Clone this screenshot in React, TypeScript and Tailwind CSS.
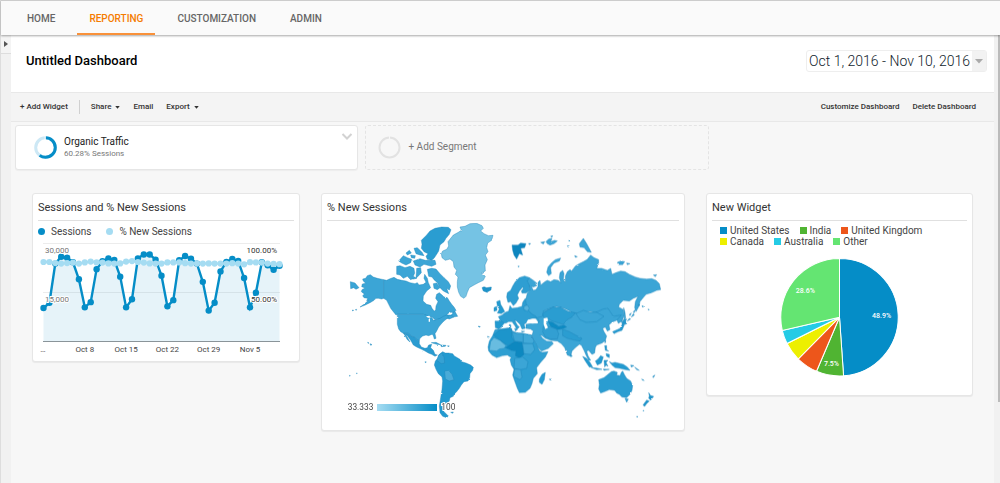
import type { ReactNode } from 'react';

type Shape = { d: string; fill?: string };
type Region = { transform?: string; shapes: Shape[] };

const navItems = ['HOME', 'REPORTING', 'CUSTOMIZATION', 'ADMIN'];

const sessions = [
  10100, 11700, 23700, 25800, 25500, 24100, 18900, 10300, 11900, 22000, 24400,
  25300, 24800, 19700, 10300, 12800, 25300, 26500, 26500, 24900, 20000, 10600,
  12500, 24700, 26000, 25200, 23700, 18100, 9300, 11700, 21300, 24200, 25100,
  24500, 19300, 10300, 14800, 24100, 23200, 21800, 23000,
];

const newSessions = [
  80.6, 80.6, 79.5, 79, 79.5, 80, 79, 80.2, 81, 80.2, 80, 79.2, 79, 79.2, 81,
  81.6, 80.6, 80, 79.2, 79, 79, 80.2, 80.2, 80.2, 79.4, 79, 79, 79, 79.2, 79,
  79, 79, 79.4, 79, 78.2, 80.4, 80.2, 80, 79, 78.6, 78.4,
];

const slices = [
  { name: 'United States', value: 48.9, color: '#058dc7' },
  { name: 'India', value: 7.5, color: '#50b432' },
  { name: 'United Kingdom', value: 6, color: '#ed561b' },
  { name: 'Canada', value: 5.2, color: '#edef00' },
  { name: 'Australia', value: 3.8, color: '#24cbe5' },
  { name: 'Other', value: 28.6, color: '#64e572' },
];

const regions: Region[] = [
  // Canada, Alaska, Greenland and Iceland
  {
    shapes: [
      {
        d: 'M191,266 172,262 160,258 151,251 142,254 137,262 128,264 130,270 137,277 127,279 125,287 135,291 126,296 124,302 133,309 128,314 132,320 143,322 140,330 146,328 132,340 120,348 134,343 150,335 162,328 168,322 175,322 185,324 191,322Z',
      },
      {
        d: 'M191,266 200,268 210,263 222,259 232,265 245,268 258,270 270,275 285,278 292,275 297,282 310,280 318,274 312,262 314,250 322,262 325,275 332,290 320,300 310,315 309,330 320,340 332,343 336,352 343,361 347,356 348,345 354,332 347,322 350,310 358,305 366,312 372,318 382,320 388,330 395,340 402,348 408,358 400,366 390,362 380,372 396,372 402,378 388,384 374,380 360,384 345,386 336,378 324,376 310,370 233,370 228,372 220,362 212,352 206,340 200,328 191,322Z',
      },
      { d: 'M91,272 105,276 117,290 108,295 101,290 92,293Z' },
      { d: 'M97,357 101,358 98,360ZM106,356 110,355 109,358Z' },
      {
        d: 'M304,148 318,134 330,120 345,112 365,108 385,109 393,116 388,130 378,142 372,152 360,162 356,180 350,190 342,202 335,208 322,205 318,196 324,188 312,182 304,172 306,160Z',
        fill: '#2b9dd1',
      },
      {
        d: 'M230,226 240,224 255,230 270,226 282,232 284,246 280,256 290,262 272,266 262,256 250,262 240,252 230,250Z',
      },
      { d: 'M236,210 250,194 262,200 275,205 272,215 258,222 245,216Z' },
      { d: 'M258,186 268,178 274,186 262,192ZM272,192 286,194 284,202 274,200Z' },
      { d: 'M282,172 292,170 306,184 312,194 300,192 288,188Z' },
      { d: 'M280,210 300,203 316,208 345,208 348,220 335,226 312,220 300,228 285,222Z' },
      { d: 'M290,232 302,230 304,245 296,254 288,262Z' },
      {
        d: 'M322,235 335,232 348,234 360,248 372,260 385,272 392,285 388,297 380,292 386,308 370,300 360,290 352,275 342,266 336,258 326,256Z',
      },
      { d: 'M340,278 350,276 360,290 352,296 342,292Z' },
      { d: 'M394,372 404,360 413,376 400,378Z' },
      {
        d: 'M364,188 368,180 380,175 386,165 384,152 392,142 400,132 415,124 424,118 420,108 435,106 450,98 470,97 486,104 490,112 482,120 492,128 505,134 519,133 515,148 503,156 500,170 504,182 496,192 502,206 495,222 496,240 484,246 496,256 490,268 475,275 462,282 448,290 442,304 438,316 432,322 422,316 416,304 412,288 412,272 414,258 406,250 410,238 402,228 400,212 390,204 376,208 366,200Z',
        fill: '#75c3e4',
      },
      { d: 'M486,290 492,287 500,290 514,288 513,297 500,304 490,300Z', fill: '#1e93c9' },
    ],
  },
  // United States, Central and South America
  {
    transform: 'translate(0 330)',
    shapes: [
      {
        d: 'M232,40 310,40 318,42 326,46 336,50 340,58 348,56 360,52 370,46 380,42 386,48 382,52 372,60 366,66 356,78 350,90 345,98 348,112 343,114 340,104 336,100 326,104 318,102 308,105 300,112 298,118 292,118 284,108 276,106 265,97 250,97 242,92 236,84 232,70Z',
      },
      {
        d: 'M250,97 265,97 276,106 284,108 292,118 298,118 298,128 304,138 315,142 322,140 326,132 335,130 332,140 340,148 345,160 352,162 345,166 335,160 325,156 315,150 305,145 290,138 280,132 272,118 262,104Z',
        fill: '#2a9bd0',
      },
      { d: 'M252,99 258,102 264,112 270,123 262,116Z' },
      { d: 'M318,46 328,44 332,50 324,50ZM326,54 330,52 330,62 326,62Z', fill: '#ffffff' },
      { d: 'M334,125 348,124 362,131 350,130ZM362,132 378,133 376,136 364,137ZM383,134 388,135 384,137Z' },
      {
        d: 'M358,160 368,152 376,156 385,156 398,158 403,165 412,170 420,175 425,182 438,186 452,192 460,199 458,208 450,218 449,230 444,240 432,242 424,252 418,262 410,272 402,280 400,286 390,290 388,300 382,306 370,308 368,320 372,332 385,345 380,350 368,346 360,335 358,315 362,290 366,265 368,240 366,228 355,218 348,205 343,192 346,180 354,172Z',
        fill: '#249ad0',
      },
      { d: 'M356,162 366,156 372,168 374,186 364,188 350,178Z', fill: '#36a1d3' },
      { d: 'M374,210 386,208 396,220 402,236 388,240 376,234Z', fill: '#49abd8' },
      { d: 'M392,334 400,333 398,337ZM150,128 156,131 152,133ZM88,223 91,224 89,226ZM109,216 112,217 110,218Z' },
      { d: 'M315,182 319,183 316,185ZM143,124 147,126 144,127ZM475,75 481,77 477,79Z' },
    ],
  },
  // Northern Europe and Russia
  {
    transform: 'translate(510 60)',
    shapes: [
      {
        d: 'M118,200 130,208 140,216 140,224 130,228 124,226 130,238 138,236 144,226 144,214 150,208 152,222 165,212 172,208 182,212 192,206 205,208 212,215 208,200 210,185 218,178 222,188 220,205 226,214 226,195 232,182 240,176 245,180 256,165 268,158 280,152 292,145 302,132 312,140 326,146 326,158 320,172 335,172 352,178 362,172 366,190 378,185 392,180 405,182 418,190 436,198 450,202 470,204 485,203 498,208 508,218 512,236 500,238 485,245 468,250 458,262 450,272 448,284 438,302 434,290 436,272 444,256 430,262 418,270 400,268 388,280 386,288 400,296 402,315 396,330 385,337 378,320 362,316 352,292 340,302 325,308 300,302 280,305 262,306 256,316 240,300 222,292 200,286 188,290 165,298 160,310 166,322 164,338 145,335 138,322 124,318 112,306 108,290 104,275 108,262 112,246 120,238 116,222 110,210Z',
      },
      {
        d: 'M50,258 52,245 62,238 68,225 76,212 88,200 104,195 118,200 112,210 118,222 120,238 108,246 96,246 94,240 100,232 98,228 88,240 82,252 86,262 78,276 70,284 62,272 54,274Z',
        fill: '#2d9ed2',
      },
      { d: 'M20,272 30,268 32,280 38,290 44,302 34,308 22,306 28,294 22,284Z', fill: '#249ad0' },
      { d: 'M12,290 20,286 21,298 12,301Z', fill: '#249ad0' },
      {
        d: 'M66,102 84,102 92,96 108,98 104,110 92,112 98,132 88,128 80,144 72,132 68,118Z',
        fill: '#0e86bf',
      },
      { d: 'M152,94 164,92 160,99ZM168,92 176,84 186,82 182,92 194,88 202,90 192,98 180,102 172,98ZM182,76 188,74 186,79Z' },
      { d: 'M176,194 170,184 174,168 184,156 196,146 212,141 208,150 192,156 182,170 184,188Z' },
      { d: 'M268,98 280,82 290,98 304,124 292,122 282,110 270,108Z' },
      { d: 'M382,154 392,150 404,152 398,161 386,161ZM410,156 420,158 412,161ZM490,192 500,191 496,197Z' },
      { d: 'M232,104 238,105 234,108ZM236,88 240,88 238,91ZM254,134 262,137 256,139ZM116,97 122,98 118,101ZM84,165 88,166 85,168Z' },
      { d: 'M401,290 405,304 407,322 403,326 402,308Z' },
      { d: 'M394,330 406,330 410,338 398,344ZM456,284 461,286 458,289ZM474,294 478,296 475,297ZM430,308 433,312 424,318ZM418,322 422,324 412,330Z' },
    ],
  },
  // Rest of Europe, Asia, Africa and Oceania
  {
    transform: 'translate(480 330)',
    shapes: [
      {
        d: 'M62,60 55,47 66,42 76,34 86,30 90,14 96,22 112,20 126,16 128,4 136,-8 138,5 142,24 154,38 168,46 170,52 158,52 150,54 144,58 138,66 132,70 136,82 126,84 120,70 110,60 104,58 112,72 118,78 110,86 106,76 96,62 86,62 78,66 70,66Z',
        fill: '#2d9ed2',
      },
      { d: 'M45,60 63,60 73,66 64,78 56,84 46,80Z', fill: '#249ad0' },
      { d: 'M132,16 142,12 148,22 142,30 132,26Z', fill: '#55b2dc' },
      { d: 'M104,82 112,86 106,90ZM88,70 93,72 92,80 88,80ZM124,90 134,91 126,93Z' },
      {
        d: 'M138,70 155,67 170,68 178,62 172,50 188,46 190,30 220,18 252,26 270,34 292,36 330,38 352,32 370,24 384,22 400,46 424,42 410,58 395,64 387,72 390,86 382,90 376,78 368,82 372,92 380,105 376,118 366,126 350,132 346,140 344,156 336,160 326,148 320,150 324,164 332,178 326,178 318,162 312,148 304,132 298,130 286,140 276,150 272,166 262,162 254,140 244,128 232,120 212,118 196,112 186,104 180,102 188,112 200,120 216,122 220,128 205,142 185,150 174,140 166,126 158,112 156,102 160,90 152,84 138,82Z',
      },
      {
        d: 'M188,38 202,28 220,18 242,18 262,30 286,36 276,48 262,56 250,70 236,66 216,60 204,52 192,50Z',
        fill: '#2b9dd1',
      },
      { d: 'M288,38 310,28 330,34 350,34 372,46 350,62 318,64 300,56Z' },
      { d: 'M204,60 218,64 236,76 252,72 260,78 244,84 230,86 212,76Z', fill: '#0f8bc3' },
      { d: 'M190,76 206,76 230,84 236,98 232,114 212,114 196,108 188,92Z', fill: '#339fd2' },
      { d: 'M248,84 268,92 290,104 306,112 300,120 286,118 262,112 248,104Z', fill: '#2b9dd1' },
      { d: 'M191,52 202,50 204,58 198,66 204,80 196,84 191,70Z', fill: '#ffffff' },
      { d: 'M140,64 144,56 156,54 160,58 172,60 174,66 156,68Z', fill: '#ffffff' },
      {
        d: 'M45,86 58,84 75,82 90,80 98,90 112,96 126,96 140,100 154,102 160,116 170,132 178,148 186,154 204,152 196,168 182,184 170,200 172,218 160,232 156,248 150,262 136,274 118,275 112,262 104,240 98,222 102,205 94,192 90,175 94,170 82,162 68,164 50,170 36,162 26,150 24,138 28,120 38,104Z',
        fill: '#2e9fd2',
      },
      { d: 'M40,102 60,86 95,82 95,108 104,122 84,134 60,118Z', fill: '#1e95cb' },
      { d: 'M96,94 112,96 130,98 130,124 104,120Z', fill: '#3aa4d5' },
      { d: 'M130,98 154,102 162,120 158,128 130,126Z', fill: '#42a9d8' },
      { d: 'M32,122 42,110 60,118 78,134 72,142 58,144 50,150 28,148Z', fill: '#68bce0' },
      { d: 'M76,140 104,122 126,124 132,160 118,172 106,164 108,150 94,148Z', fill: '#0c88c0' },
      { d: 'M128,128 158,128 164,146 152,160 132,158Z', fill: '#42a9d8' },
      { d: 'M104,172 128,168 144,182 140,202 120,206 102,202Z' },
      { d: 'M104,204 122,206 126,228 120,236 100,226Z', fill: '#42a9d8' },
      { d: 'M178,234 186,220 196,214 193,236 186,250 178,244Z', fill: '#249ad0' },
      {
        d: 'M356,236 372,230 384,220 394,212 402,210 412,214 410,222 420,224 424,214 428,210 434,222 440,232 452,240 458,254 456,268 450,280 440,290 426,288 418,280 410,276 404,268 388,266 374,272 362,276 356,264 358,250Z',
        fill: '#2b9dd1',
      },
      { d: 'M435,292 445,294 440,304Z' },
      { d: 'M506,275 512,284 521,286 512,297 506,292 508,284ZM500,297 508,300 500,308 494,316 489,312Z', fill: '#1e95cb' },
      { d: 'M388,182 396,186 405,184 430,190 442,198 450,208 436,206 420,202 405,200 396,192Z', fill: '#249ad0' },
      { d: 'M346,180 354,174 362,164 370,168 364,186 352,192Z', fill: '#249ad0' },
      { d: 'M308,166 320,172 330,184 338,198 328,198 316,180Z', fill: '#249ad0' },
      { d: 'M334,200 350,201 366,205 350,206ZM370,204 388,205 372,208Z', fill: '#249ad0' },
      { d: 'M372,178 384,178 378,184 384,196 378,192 374,198Z', fill: '#249ad0' },
      { d: 'M374,134 380,134 380,146 386,150 376,148ZM378,158 388,160 388,170 380,166ZM374,118 378,120 375,126Z', fill: '#249ad0' },
      { d: 'M272,160 277,166 272,167ZM452,192 462,194 454,198ZM464,198 478,208 470,206ZM485,234 493,238 488,238ZM518,226 525,222 520,230Z' },
      { d: 'M430,56 440,54 436,62 440,66 430,68ZM428,68 432,74 426,88 414,92 402,98 398,92 412,86 420,82Z', fill: '#249ad0' },
      { d: 'M208,234 215,235 210,237ZM470,346 474,347 471,349ZM489,328 492,329 490,331ZM22,106 28,108 24,110Z' },
      { d: 'M474,10 480,12 476,14ZM460,32 466,26 462,36ZM448,40 454,36 450,44Z' },
    ],
  },
];

function Caret() {
  return (
    <svg className="w-[5px] h-[3px]" viewBox="0 0 6 4" fill="currentColor" aria-hidden="true">
      <path d="M0 0h6L3 3.5z" />
    </svg>
  );
}

function Widget({ title, children }: { title: string; children: ReactNode }) {
  return (
    <section className="rounded-[3px] border border-[#e6e6e6] bg-white px-[5px] shadow-[0_1px_1px_rgba(0,0,0,0.06)]">
      <h2 className="border-b border-[#e0e0e0] pt-[6px] pb-[4px] text-[11px] leading-4 text-[#333]">
        {title}
      </h2>
      {children}
    </section>
  );
}

function TimelineChart() {
  const x = (i: number) => 5.5 + i * 5.9;
  const ySessions = (v: number) => 101 - (v / 30000) * 98;
  const yPercent = (v: number) => 101 - (v / 100) * 98;
  const line = sessions.map((v, i) => `${x(i)},${ySessions(v)}`).join(' ');
  const percentLine = newSessions.map((v, i) => `${x(i)},${yPercent(v)}`).join(' ');
  const ticks = [
    { label: 'Oct 8', day: 7 },
    { label: 'Oct 15', day: 14 },
    { label: 'Oct 22', day: 21 },
    { label: 'Oct 29', day: 28 },
    { label: 'Nov 5', day: 35 },
  ];

  return (
    <svg className="block w-full" viewBox="0 0 256 120" role="img" aria-label="Sessions and % New Sessions">
      <path d="M5 3.5H242M5 52.5H242" stroke="#ececec" />
      <polygon points={`5.5,101 ${line} ${x(40)},101`} fill="#058dc7" fillOpacity="0.1" />
      <path d="M5 101.5H242" stroke="#8a9499" />
      <g fill="#058dc7">
        <polyline points={line} fill="none" stroke="#058dc7" strokeWidth="2.4" />
        {sessions.map((v, i) => (
          <circle key={i} cx={x(i)} cy={ySessions(v)} r="3.2" />
        ))}
      </g>
      <g fill="#a5dcf2">
        <polyline points={percentLine} fill="none" stroke="#a5dcf2" strokeWidth="2.4" />
        {newSessions.map((v, i) => (
          <circle key={i} cx={x(i)} cy={yPercent(v)} r="3.1" />
        ))}
      </g>
      <g className="font-[Roboto,sans-serif] text-[8px]" stroke="#fff" strokeWidth="2" paintOrder="stroke">
        <text x="7" y="13" fill="#777">30,000</text>
        <text x="7" y="62" fill="#777">15,000</text>
        <text x="239" y="13" fill="#333" textAnchor="end">100.00%</text>
        <text x="239" y="62" fill="#333" textAnchor="end">50.00%</text>
      </g>
      <g className="font-[Roboto,sans-serif] text-[8px]" fill="#444" textAnchor="middle">
        <text x="5" y="112">…</text>
        {ticks.map((t) => (
          <text key={t.label} x={x(t.day)} y="112">
            {t.label}
          </text>
        ))}
      </g>
    </svg>
  );
}

function WorldMap() {
  return (
    <svg className="block w-full" viewBox="21 93 1056 600" role="img" aria-label="% New Sessions by country">
      <defs>
        <filter id="coast" x="0" y="0" width="100%" height="100%">
          <feTurbulence type="fractalNoise" baseFrequency="0.07" numOctaves="2" seed="4" result="noise" />
          <feDisplacementMap in="SourceGraphic" in2="noise" scale="5" xChannelSelector="R" yChannelSelector="G" />
        </filter>
        <linearGradient id="scale">
          <stop offset="0" stopColor="#a5dcf2" />
          <stop offset="1" stopColor="#058dc7" />
        </linearGradient>
      </defs>
      <g
        filter="url(#coast)"
        fill="#3aa5d6"
        stroke="#1c84b8"
        strokeOpacity="0.6"
        strokeWidth="2"
        strokeLinejoin="round"
      >
        {regions.map((region, i) => (
          <g key={i} transform={region.transform}>
            {region.shapes.map((shape) => (
              <path
                key={shape.d}
                d={shape.d}
                fill={shape.fill}
                stroke={shape.fill === '#ffffff' ? 'none' : undefined}
              />
            ))}
          </g>
        ))}
      </g>
      <rect x="171" y="639" width="180" height="21" fill="url(#scale)" />
      <g
        className="font-[Roboto,sans-serif] text-[25px]"
        fill="#444"
        stroke="#fff"
        strokeWidth="6"
        paintOrder="stroke"
      >
        <text x="160" y="657" textAnchor="end">33.333</text>
        <text x="364" y="657">100</text>
      </g>
    </svg>
  );
}

function PieChart() {
  const radius = 58.5;
  const total = slices.reduce((sum, s) => sum + s.value, 0);
  const point = (share: number, r: number) => {
    const angle = share * Math.PI * 2;
    return `${Math.sin(angle) * r},${-Math.cos(angle) * r}`;
  };
  let start = 0;

  return (
    <svg className="block w-full" viewBox="-127 -59 254 118" role="img" aria-label="Sessions by country">
      {slices.map((slice) => {
        const from = start;
        const to = start + slice.value / total;
        start = to;
        return (
          <path
            key={slice.name}
            d={`M0,0L${point(from, radius)}A${radius},${radius} 0 0 1 ${point(to, radius)}Z`}
            fill={slice.color}
            stroke="#fff"
            strokeWidth="1"
          />
        );
      })}
      <g className="font-[Roboto,sans-serif] text-[7px] font-medium" fill="#fff" textAnchor="middle">
        <text x="42" y="1">48.9%</text>
        <text x="-8" y="49">7.5%</text>
        <text x="-34" y="-24">28.6%</text>
      </g>
    </svg>
  );
}

function Toolbar() {
  const buttonClass = 'flex items-center gap-1 cursor-pointer';
  return (
    <div className="flex h-[30px] items-center justify-between border-y border-[#e8e8e8] bg-[#f4f4f4] pl-[9px] pr-[18px] text-[8px] font-medium text-[#333]">
      <div className="flex items-center">
        <button type="button" className={buttonClass}>+ Add Widget</button>
        <div className="mx-[11px] h-[14px] w-px bg-[#d0d0d0]" />
        <div className="flex gap-[13px]">
          <button type="button" className={buttonClass}>Share <Caret /></button>
          <button type="button" className={buttonClass}>Email</button>
          <button type="button" className={buttonClass}>Export <Caret /></button>
        </div>
      </div>
      <div className="flex gap-[13px]">
        <button type="button" className={buttonClass}>Customize Dashboard</button>
        <button type="button" className={buttonClass}>Delete Dashboard</button>
      </div>
    </div>
  );
}

function Segments() {
  return (
    <div className="grid grid-cols-2 gap-[7px] pt-[3px] pl-1 w-[71%]">
      <div className="flex h-[45px] justify-between rounded-[3px] border border-[#e6e6e6] bg-white pl-[18px] pr-1 shadow-[0_1px_1px_rgba(0,0,0,0.04)]">
        <div className="flex items-center gap-[7px]">
          <svg className="size-[23px]" viewBox="0 0 23 23" fill="none" strokeWidth="3" aria-hidden="true">
            <circle cx="11.5" cy="11.5" r="9.8" stroke="#cde8f5" />
            <circle
              cx="11.5"
              cy="11.5"
              r="9.8"
              stroke="#058dc7"
              pathLength="100"
              strokeDasharray="60.28 100"
              transform="rotate(-90 11.5 11.5)"
            />
            <path d="M11.2 0v4" stroke="#fff" strokeWidth="1" />
          </svg>
          <div>
            <div className="text-[10px] leading-3 text-[#222]">Organic Traffic</div>
            <div className="text-[8px] leading-[11px] text-[#777]">60.28% Sessions</div>
          </div>
        </div>
        <button type="button" className="mt-[7px] h-[7px] cursor-pointer" aria-label="Segment options">
          <svg className="w-[12px] h-[7px]" viewBox="0 0 12 7" fill="none" stroke="#d2d2d2" strokeWidth="2">
            <path d="M1.5 1L6 5.5L10.5 1" />
          </svg>
        </button>
      </div>
      <button
        type="button"
        className="flex h-[45px] cursor-pointer items-center gap-[7px] rounded-[3px] border border-dashed border-[#e4e4e4] pl-3 text-[10px] text-[#777]"
      >
        <svg className="size-[23px]" viewBox="0 0 23 23" fill="none" aria-hidden="true">
          <circle cx="11.5" cy="11.5" r="10" stroke="#e2e2e2" strokeWidth="2" />
          <path d="M11.5 0v4" stroke="#f7f7f7" />
        </svg>
        <span className="pb-[3px]">+ Add Segment</span>
      </button>
    </div>
  );
}

export default function App() {
  return (
    <div className="flex min-h-screen flex-col border-l border-[#ddd] bg-[#f7f7f7] font-[Roboto,sans-serif]">
      <header className="z-10 flex h-[35px] border-t border-[#ccc] bg-[#fafafa] pl-[14px] shadow-[0_1px_2px_rgba(0,0,0,0.35)]">
        <nav className="flex gap-[10px] text-[10px] font-medium text-[#666]">
          {navItems.map((item) => (
            <a
              key={item}
              href={`#${item.toLowerCase()}`}
              className={`flex items-center border-b-2 px-3 pt-[2px] ${
                item === 'REPORTING' ? 'border-[#f9913a] text-[#f57c00]' : 'border-transparent'
              }`}
            >
              {item}
            </a>
          ))}
        </nav>
      </header>

      <div className="flex flex-1">
        <aside className="w-[10px] shrink-0 bg-[#f1f1f1]">
          <button
            type="button"
            aria-label="Expand sidebar"
            className="flex h-[19px] w-full cursor-pointer items-center justify-center border-b border-[#ddd] bg-[#f4f4f4]"
          >
            <svg className="w-[4px] h-[6px]" viewBox="0 0 4 6" fill="#555">
              <path d="M0 0l4 3l-4 3z" />
            </svg>
          </button>
        </aside>

        <main className="flex-1 min-w-0">
          <div className="flex h-[57px] items-center justify-between bg-white pl-[15px] pr-[7px]">
            <h1 className="pb-[6px] text-[13px] font-medium text-black">Untitled Dashboard</h1>
            <button
              type="button"
              className="mb-[5px] flex h-[22px] cursor-pointer items-stretch rounded-[3px] border border-[#eee] text-[14px] font-light text-[#101c2c]"
            >
              <span className="flex items-center px-[2px]">Oct 1, 2016 - Nov 10, 2016</span>
              <span className="flex w-[14px] items-center justify-center bg-[#f2f2f2] text-[#aaa]">
                <svg className="w-[8px] h-[5px]" viewBox="0 0 8 5" fill="currentColor">
                  <path d="M0 0h8L4 4.5z" />
                </svg>
              </span>
            </button>
          </div>
          <Toolbar />
          <Segments />

          <div className="grid grid-cols-[268fr_364fr_267fr] items-start gap-[21px] pt-[23px] pr-[21px] pl-[21px]">
            <Widget title="Sessions and % New Sessions">
              <ul className="flex gap-[15px] pt-[3px] pb-px text-[10px] leading-[15px] text-[#444]">
                <li className="flex items-center gap-[6px]">
                  <span className="size-[7px] rounded-full bg-[#058dc7]" />
                  Sessions
                </li>
                <li className="flex items-center gap-[6px]">
                  <span className="size-[7px] rounded-full bg-[#a5dcf2]" />
                  % New Sessions
                </li>
              </ul>
              <div className="pb-px">
                <TimelineChart />
              </div>
            </Widget>

            <Widget title="% New Sessions">
              <div className="pt-px pb-2">
                <WorldMap />
              </div>
            </Widget>

            <Widget title="New Widget">
              <ul className="flex flex-wrap gap-x-[10px] px-2 pt-1 pb-[11px] text-[10px] leading-[11px] text-[#444]">
                {slices.map((slice) => (
                  <li key={slice.name} className="flex items-center gap-[3px]">
                    <span className="size-[7px]" style={{ backgroundColor: slice.color }} />
                    {slice.name}
                  </li>
                ))}
              </ul>
              <div className="pb-[19px]">
                <PieChart />
              </div>
            </Widget>
          </div>
        </main>

        <div className="w-[6px] shrink-0 bg-[#f1f1f1]">
          <div className="ml-auto h-[367px] w-[2px] bg-[#bbb]" />
        </div>
      </div>
    </div>
  );
}
